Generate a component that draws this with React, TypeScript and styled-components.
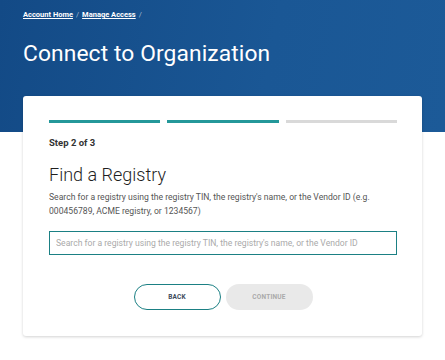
import React from 'react';
import styled, { createGlobalStyle } from 'styled-components';

const GlobalStyle = createGlobalStyle`
  html, body {
    margin: 0;
    padding: 0;
    background: #ffffff;
    font-family: Roboto, 'Liberation Sans', sans-serif;
  }
`;

const Page = styled.div`
  width: 445px;
  min-height: 360px;
  background: #fff;
`;

const Header = styled.header`
  height: 132px;
  box-sizing: border-box;
  padding: 10px 23px 0;
  background: linear-gradient(100deg, #134a86 0%, #1a5795 60%, #1c5a98 100%);
  color: #fff;
`;

const Crumbs = styled.nav`
  display: flex;
  align-items: center;
  gap: 3px;
  font-size: 7.5px;
  font-weight: 700;
  line-height: 10px;

  a {
    color: #fff;
    text-decoration: underline;
  }

  span {
    color: rgba(255, 255, 255, 0.6);
    font-weight: 400;
  }
`;

const Title = styled.h1`
  margin: 20px 0 0;
  font-size: 22.8px;
  font-weight: 400;
  line-height: 28px;
  letter-spacing: 0.1px;
`;

const Main = styled.main`
  padding: 0 23px;
`;

const Card = styled.section`
  margin-top: -36px;
  background: #fff;
  border-radius: 3px;
  box-shadow: 0 1px 3px rgba(0, 0, 0, 0.18);
  padding: 24px 25px 26px 26px;
`;

const Steps = styled.div`
  display: grid;
  grid-template-columns: repeat(3, 1fr);
  gap: 7px;
`;

const StepBar = styled.div<{ $done: boolean }>`
  height: 3px;
  background: ${(p) => (p.$done ? '#24989a' : '#d9d9d9')};
`;

const StepLabel = styled.div`
  margin-top: 14px;
  font-size: 9.5px;
  font-weight: 700;
  color: #333;
  line-height: 12px;
`;

const Heading = styled.h2`
  margin: 15px 0 0;
  font-size: 18px;
  font-weight: 300;
  color: #1f1f1f;
  line-height: 22px;
`;

const Help = styled.p`
  margin: 4px 0 0;
  font-size: 8.6px;
  line-height: 14px;
  color: #555;
`;

const SearchInput = styled.input`
  display: block;
  margin-top: 13px;
  width: 100%;
  box-sizing: border-box;
  height: 24px;
  border: 1px solid #1b8084;
  border-radius: 0;
  padding: 0 6px;
  font-family: Roboto, 'Liberation Sans', sans-serif;
  font-size: 8.6px;
  color: #333;
  outline: none;

  &::placeholder {
    color: #aaa;
  }
`;

const Actions = styled.div`
  display: flex;
  justify-content: center;
  gap: 5px;
  margin-top: 29px;
`;

const Button = styled.button<{ $variant: 'outline' | 'disabled' }>`
  width: 87px;
  height: 26px;
  border-radius: 13px;
  box-sizing: border-box;
  font-family: Roboto, 'Liberation Sans', sans-serif;
  font-size: 6.5px;
  font-weight: 700;
  letter-spacing: 0.2px;
  text-transform: uppercase;
  border: ${(p) => (p.$variant === 'outline' ? '1.5px solid #1b8084' : 'none')};
  background: ${(p) => (p.$variant === 'outline' ? '#fff' : '#e9e9e9')};
  color: ${(p) => (p.$variant === 'outline' ? '#3d4a5a' : '#aaa')};
  padding: 0;
`;

export default function App() {
  return (
    <Page>
      <GlobalStyle />
      <Header>
        <Crumbs>
          <a href="#">Account Home</a>
          <span>/</span>
          <a href="#">Manage Access</a>
          <span>/</span>
        </Crumbs>
        <Title>Connect to Organization</Title>
      </Header>
      <Main>
        <Card>
          <Steps>
            <StepBar $done />
            <StepBar $done />
            <StepBar $done={false} />
          </Steps>
          <StepLabel>Step 2 of 3</StepLabel>
          <Heading>Find a Registry</Heading>
          <Help>
            Search for a registry using the registry TIN, the registry's name, or the Vendor ID (e.g.
            000456789, ACME registry, or 1234567)
          </Help>
          <SearchInput placeholder="Search for a registry using the registry TIN, the registry's name, or the Vendor ID" />
          <Actions>
            <Button $variant="outline">Back</Button>
            <Button $variant="disabled" disabled>
              Continue
            </Button>
          </Actions>
        </Card>
      </Main>
    </Page>
  );
}
